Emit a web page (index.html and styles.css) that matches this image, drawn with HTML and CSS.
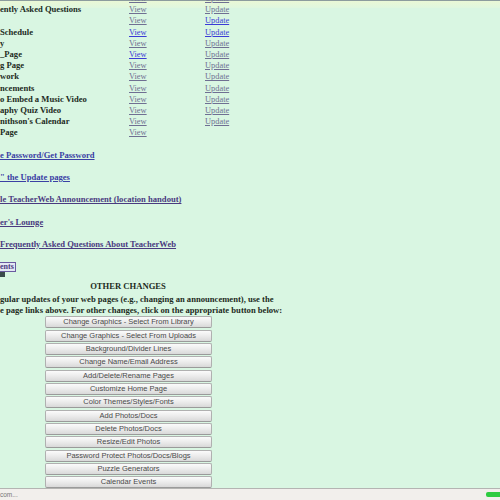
FILE: index.html
```html
<!DOCTYPE html>
<html>
<head>
<meta charset="utf-8">
<link rel="stylesheet" href="styles.css">
</head>
<body>
<div class="topbar"></div>
<div class="pages">
  <div class="label"></div><a class="lnk v" href="#">View</a><a class="lnk v" href="#">Update</a>
  <div class="label">ently Asked Questions</div><a class="lnk v" href="#">View</a><a class="lnk v" href="#">Update</a>
  <div class="label"></div><a class="lnk v" href="#">View</a><a class="lnk n" href="#">Update</a>
  <div class="label">Schedule</div><a class="lnk n" href="#">View</a><a class="lnk n" href="#">Update</a>
  <div class="label">y</div><a class="lnk v" href="#">View</a><a class="lnk v" href="#">Update</a>
  <div class="label">_Page</div><a class="lnk n" href="#">View</a><a class="lnk v" href="#">Update</a>
  <div class="label">g Page</div><a class="lnk v" href="#">View</a><a class="lnk v" href="#">Update</a>
  <div class="label">work</div><a class="lnk v" href="#">View</a><a class="lnk v" href="#">Update</a>
  <div class="label">ncements</div><a class="lnk v" href="#">View</a><a class="lnk v" href="#">Update</a>
  <div class="label">o Embed a Music Video</div><a class="lnk v" href="#">View</a><a class="lnk v" href="#">Update</a>
  <div class="label">aphy Quiz Video</div><a class="lnk v" href="#">View</a><a class="lnk v" href="#">Update</a>
  <div class="label">nithson's Calendar</div><a class="lnk v" href="#">View</a><a class="lnk v" href="#">Update</a>
  <div class="label">Page</div><a class="lnk v" href="#">View</a><span></span>
</div>
<div class="links">
  <p><a class="big blue" href="#">e Password/Get Password</a></p>
  <p><a class="big blue" href="#">" the Update pages</a></p>
  <p><a class="big" href="#">le TeacherWeb Announcement (location handout)</a></p>
  <p><a class="big" href="#">er's Lounge</a></p>
  <p><a class="big" href="#">Frequently Asked Questions About TeacherWeb</a></p>
  <div class="entsrow">
    <a class="ents" href="#">ents</a>
    <span class="mini"></span>
  </div>
</div>
<h2 class="heading">OTHER CHANGES</h2>
<p class="para">gular updates of your web pages (e.g., changing an announcement), use the<br>e page links above. For other changes, click on the appropriate button below:</p>
<div class="buttons">
  <button class="btn">Change Graphics - Select From Library</button>
  <button class="btn">Change Graphics - Select From Uploads</button>
  <button class="btn">Background/Divider Lines</button>
  <button class="btn">Change Name/Email Address</button>
  <button class="btn">Add/Delete/Rename Pages</button>
  <button class="btn">Customize Home Page</button>
  <button class="btn">Color Themes/Styles/Fonts</button>
  <button class="btn">Add Photos/Docs</button>
  <button class="btn">Delete Photos/Docs</button>
  <button class="btn">Resize/Edit Photos</button>
  <button class="btn">Password Protect Photos/Docs/Blogs</button>
  <button class="btn">Puzzle Generators</button>
  <button class="btn">Calendar Events</button>
</div>
<div class="status">
  <span class="status-text">com...</span>
  <span class="progress"></span>
</div>
</body>
</html>
```
FILE: styles.css
```css
html, body {
  margin: 0;
  padding: 0;
  height: 500px;
  overflow: hidden;
}
body {
  background: #d9f6e2;
  font-family: "Liberation Serif", "Times New Roman", serif;
  font-size: 8.6px;
  color: #1d2b1d;
}
.topbar {
  height: 7px;
  border-top: 1px solid #8c9c9e;
  background: linear-gradient(#eaf8d6, #dff7df);
}
.pages {
  display: grid;
  grid-template-columns: 129px 76px 80px;
  grid-auto-rows: 11.2px;
  align-items: center;
  margin-top: -15px;
  line-height: 11.2px;
}
.label {
  font-weight: bold;
  white-space: nowrap;
}
.lnk {
  font-size: 8.4px;
  text-decoration: underline;
}
.lnk.v { color: #6f6f92; }
.lnk.n { color: #3b3bd6; }
.links {
  margin-top: 11.2px;
}
.links p {
  margin: 0 0 11.2px 0;
  line-height: 11.2px;
  white-space: nowrap;
}
.big {
  font-weight: bold;
  color: #4a3a80;
  text-decoration: underline;
}
.big.blue { color: #3a40a4; }
.entsrow {
  height: 19px;
  display: flex;
  flex-direction: column;
  align-items: flex-start;
}
.ents {
  display: block;
  height: 8px;
  line-height: 8px;
  padding: 0 1px 0 0;
  border: 1px solid #6a5aa0;
  border-left: none;
  color: #4a3a80;
  font-weight: bold;
  font-size: 8px;
  text-decoration: none;
  background: #e4e8f4;
}
.mini {
  display: block;
  width: 5px;
  height: 5px;
  background: #3a4a4a;
}
.heading {
  margin: 0 0 2px 0;
  width: 256px;
  text-align: center;
  font-size: 8.6px;
  line-height: 11.2px;
  font-weight: bold;
  color: #1d2b1d;
}
.para {
  margin: 0;
  font-weight: bold;
  line-height: 11.3px;
  white-space: nowrap;
  color: #1d2b1d;
}
.buttons {
  margin-left: 45px;
  width: 167px;
  display: flex;
  flex-direction: column;
  gap: 1.33px;
}
.btn {
  display: block;
  height: 12px;
  width: 167px;
  padding: 0;
  margin: 0;
  border: 1px solid #b0b0b0;
  border-bottom-color: #9a9a9a;
  border-radius: 2px;
  background: linear-gradient(#fbfbfb, #ededed 45%, #d9d9d9);
  font-family: "Liberation Sans", Arial, sans-serif;
  font-size: 7.5px;
  line-height: 10px;
  color: #4a4a4a;
  text-align: center;
}
.status {
  position: fixed;
  left: 0;
  right: 0;
  bottom: 0;
  height: 11px;
  border-top: 1px solid #b4b4b2;
  background: #f2efec;
  display: flex;
  align-items: center;
  justify-content: space-between;
}
.status-text {
  font-family: "Liberation Sans", Arial, sans-serif;
  font-size: 6.5px;
  color: #777;
}
.progress {
  width: 14px;
  height: 5px;
  background: #2ecc40;
  border-radius: 2px 0 0 2px;
}
```
